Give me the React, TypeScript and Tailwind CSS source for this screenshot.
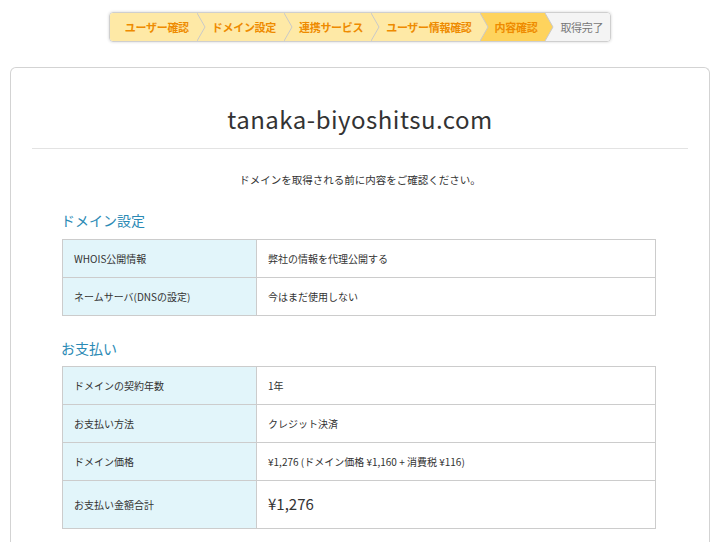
const jp = "font-['Noto_Sans_CJK_JP','Noto_Sans',sans-serif]";

const steps = [
  { label: "ユーザー確認", state: "done" },
  { label: "ドメイン設定", state: "done" },
  { label: "連携サービス", state: "done" },
  { label: "ユーザー情報確認", state: "done" },
  { label: "内容確認", state: "current" },
  { label: "取得完了", state: "todo" },
];

const bgOf: Record<string, string> = {
  done: "#fee9a6",
  current: "#fed35d",
  todo: "#f4f4f4",
};

const Chevron = ({ from, to }: { from: string; to: string }) => (
  <svg width="9" height="28" viewBox="0 0 9 28" className="block shrink-0">
    <rect x="0" y="0" width="9" height="28" fill={to} />
    <polygon points="0,0 8,14 0,28" fill={from} />
    <polyline points="0,0 8,14 0,28" fill="none" stroke="#c9c9c9" strokeWidth="1" />
  </svg>
);

const StepBar = () => (
  <div className="mx-auto flex w-fit overflow-hidden rounded-[4px] border border-[#cfcfcf] shadow-[0_0_3px_rgba(0,0,0,0.18)]">
    {steps.map((s, i) => (
      <div key={s.label} className="flex">
        <div
          className={`flex h-[28px] items-center text-[11px] tracking-[-0.3px] ${
            i === 0 ? "pl-[15px]" : "pl-[6px]"
          } ${i === steps.length - 1 ? "pr-[7px]" : "pr-[8px]"} ${
            s.state === "todo" ? "text-[#777] font-normal" : "text-[#ee8b00] font-bold"
          }`}
          style={{ backgroundColor: bgOf[s.state] }}
        >
          {s.label}
        </div>
        {i < steps.length - 1 && <Chevron from={bgOf[s.state]} to={bgOf[steps[i + 1].state]} />}
      </div>
    ))}
  </div>
);

type Row = { label: string; value: React.ReactNode; tall?: boolean };

const InfoTable = ({ rows }: { rows: Row[] }) => (
  <div className="ml-[30px] mr-[32px] border border-[#cccccc]">
    {rows.map((r, i) => (
      <div key={r.label} className={`flex ${i > 0 ? "border-t border-[#cccccc]" : ""}`}>
        <div
          className={`flex w-[194px] shrink-0 items-center border-r border-[#cccccc] bg-[#e2f5fa] pl-[11px] text-[10px] text-[#333] ${
            r.tall ? "h-[47px]" : "h-[37px]"
          }`}
        >
          {r.label}
        </div>
        <div className="flex flex-1 items-center pl-[11px] text-[10px] text-[#333]">{r.value}</div>
      </div>
    ))}
  </div>
);

export default function App() {
  return (
    <div className={`${jp} min-h-[542px] bg-white pt-[12px]`}>
      <StepBar />

      <div className="mx-[10px] mt-[25px] rounded-t-[6px] border border-b-0 border-[#d3d3d3] px-[21px] pb-[20px] pt-[36px]">
        <h1 className="border-b border-[#e3e3e3] pb-[14px] text-center text-[24px] leading-[30px] tracking-[0.5px] text-[#333]">
          tanaka-biyoshitsu.com
        </h1>

        <p className="mt-[23px] text-center text-[10.5px] leading-[16px] text-[#333]">
          ドメインを取得される前に内容をご確認ください。
        </p>

        <h2 className="mt-[22px] pl-[29px] text-[14px] leading-[20px] text-[#2b8ab5]">ドメイン設定</h2>
        <div className="mt-[9px]">
          <InfoTable
            rows={[
              { label: "WHOIS公開情報", value: "弊社の情報を代理公開する" },
              { label: "ネームサーバ(DNSの設定)", value: "今はまだ使用しない" },
            ]}
          />
        </div>

        <h2 className="mt-[22px] pl-[29px] text-[14px] leading-[20px] text-[#2b8ab5]">お支払い</h2>
        <div className="mt-[8px]">
          <InfoTable
            rows={[
              { label: "ドメインの契約年数", value: "1年" },
              { label: "お支払い方法", value: "クレジット決済" },
              { label: "ドメイン価格", value: "¥1,276 (ドメイン価格 ¥1,160 + 消費税 ¥116)" },
              {
                label: "お支払い金額合計",
                value: <span className="text-[15px]">¥1,276</span>,
                tall: true,
              },
            ]}
          />
        </div>
      </div>
    </div>
  );
}
